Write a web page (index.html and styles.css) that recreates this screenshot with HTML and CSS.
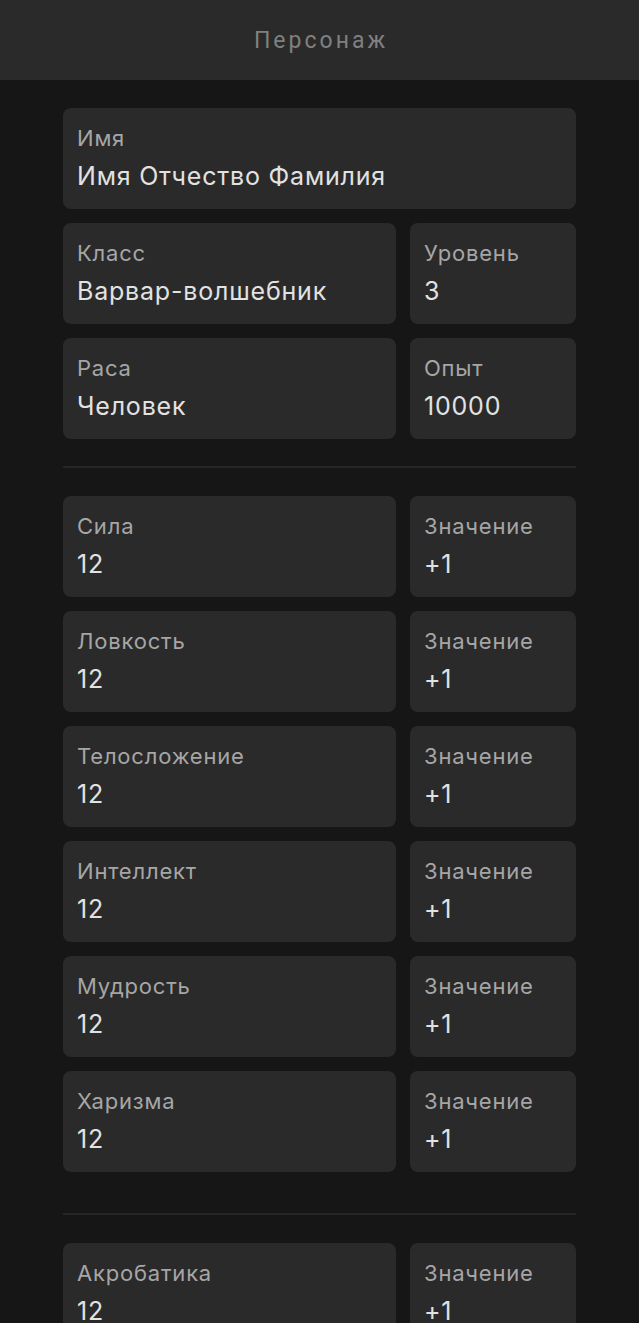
FILE: index.html
```html
<!DOCTYPE html>
<html lang="ru">
<head>
<meta charset="utf-8">
<title>Персонаж</title>
<link rel="stylesheet" href="styles.css">
</head>
<body>
<header class="topbar"><h1 class="title">Персонаж</h1></header>
<main class="content">
  <section class="group">
    <div class="row row-full">
      <div class="field"><div class="label">Имя</div><div class="value">Имя Отчество Фамилия</div></div>
    </div>
    <div class="row">
      <div class="field"><div class="label">Класс</div><div class="value">Варвар-волшебник</div></div>
      <div class="field"><div class="label">Уровень</div><div class="value">3</div></div>
    </div>
    <div class="row">
      <div class="field"><div class="label">Раса</div><div class="value">Человек</div></div>
      <div class="field"><div class="label">Опыт</div><div class="value">10000</div></div>
    </div>
  </section>
  <hr class="divider">
  <section class="group group-stats">
    <div class="row">
      <div class="field"><div class="label">Сила</div><div class="value">12</div></div>
      <div class="field"><div class="label">Значение</div><div class="value">+1</div></div>
    </div>
    <div class="row">
      <div class="field"><div class="label">Ловкость</div><div class="value">12</div></div>
      <div class="field"><div class="label">Значение</div><div class="value">+1</div></div>
    </div>
    <div class="row">
      <div class="field"><div class="label">Телосложение</div><div class="value">12</div></div>
      <div class="field"><div class="label">Значение</div><div class="value">+1</div></div>
    </div>
    <div class="row">
      <div class="field"><div class="label">Интеллект</div><div class="value">12</div></div>
      <div class="field"><div class="label">Значение</div><div class="value">+1</div></div>
    </div>
    <div class="row">
      <div class="field"><div class="label">Мудрость</div><div class="value">12</div></div>
      <div class="field"><div class="label">Значение</div><div class="value">+1</div></div>
    </div>
    <div class="row">
      <div class="field"><div class="label">Харизма</div><div class="value">12</div></div>
      <div class="field"><div class="label">Значение</div><div class="value">+1</div></div>
    </div>
  </section>
  <hr class="divider">
  <section class="group">
    <div class="row">
      <div class="field"><div class="label">Акробатика</div><div class="value">12</div></div>
      <div class="field"><div class="label">Значение</div><div class="value">+1</div></div>
    </div>
  </section>
</main>
</body>
</html>
```
FILE: styles.css
```css
html, body {
  margin: 0;
  padding: 0;
  background: #161616;
}
body {
  font-family: Inter, "Noto Sans", sans-serif;
}
.topbar {
  height: 80px;
  background: #2a2a2a;
  display: flex;
  align-items: center;
  justify-content: center;
}
.title {
  margin: 0;
  padding-left: 3px;
  font-family: Roboto, "Liberation Sans", sans-serif;
  font-weight: 400;
  font-size: 23px;
  letter-spacing: 3px;
  color: #808080;
}
.content {
  width: 513px;
  margin: 0 auto;
  padding-top: 28px;
}
.group {
  display: flex;
  flex-direction: column;
  gap: 14px;
}
.group-stats {
  padding-bottom: 14px;
}
.row {
  display: grid;
  grid-template-columns: 333fr 166fr;
  gap: 14px;
}
.row-full {
  grid-template-columns: 1fr;
}
.field {
  background: #2a2a2a;
  border-radius: 8px;
  padding: 17px 14px 18px;
  display: flex;
  flex-direction: column;
  gap: 9px;
}
.label {
  font-size: 22px;
  line-height: 27px;
  letter-spacing: 0.8px;
  color: #a6a6a6;
}
.value {
  font-size: 25px;
  line-height: 30px;
  letter-spacing: 0.8px;
  color: #e2e2e2;
}
.divider {
  border: 0;
  height: 2px;
  background: #262626;
  margin: 27px 0 28px;
}
```
